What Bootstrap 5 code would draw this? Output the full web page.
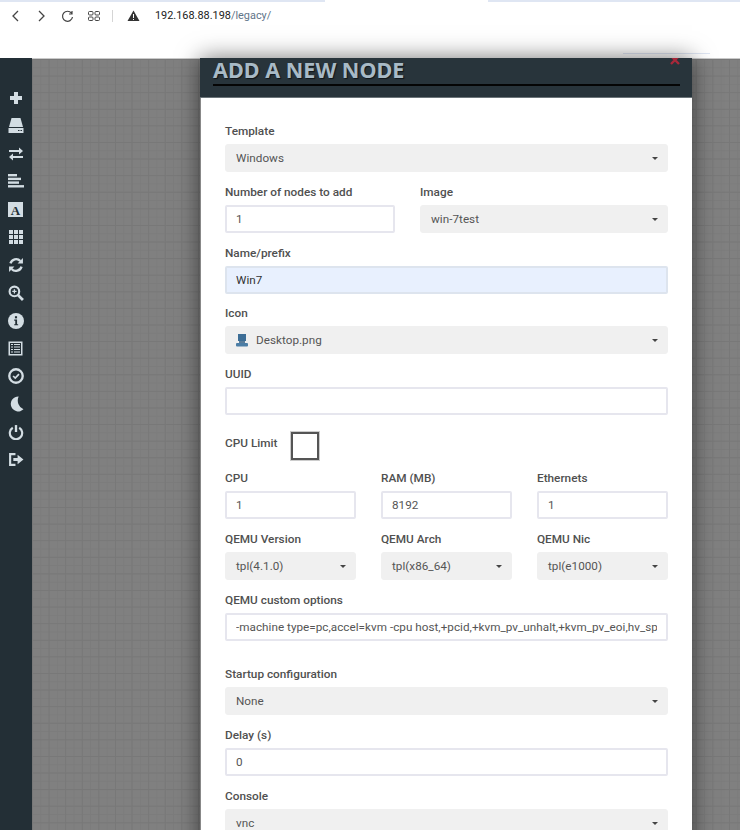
<!DOCTYPE html>
<html><head><meta charset="utf-8">
<link href="https://cdn.jsdelivr.net/npm/bootstrap@5.3.0/dist/css/bootstrap.min.css" rel="stylesheet">
<style>
html,body{height:830px;overflow:hidden;background:#fff}
body{font-family:Roboto,"Liberation Sans",sans-serif;font-size:12px;color:#444}
.shell{height:830px;overflow:hidden}
.browserbar{height:58px;position:relative;flex:none;background:#fff}
.tabedge{height:2px;background:#dfe6f3;position:absolute;top:0}
.tabedge.l{left:0;width:325px}.tabedge.r{left:488px;right:0}
.bottomedge{position:absolute;left:623px;width:87px;top:53px;height:1px;background:#dfe6f3}
.toolrow{position:absolute;left:0;top:4px;height:24px}
.toolrow svg{display:block}
.urltext{font-size:10.900px;color:#222;margin-left:15px}
.urltext span{color:#5f7488}
.sep{width:1px;height:12px;background:#d5d5d5;margin:0 14px 0 10px}
.workspace{flex:1;min-height:0}
.sidebar{width:32px;flex:none;background:#232f36;padding-top:26px;padding-right:1px}
.sideitem{height:27.85px;display:flex;justify-content:center;align-items:center;color:#d3dde3}
.canvasarea{flex:1;border-top:1px solid #c9c9c9;background-color:#808080;background-image:linear-gradient(#787878 1px,transparent 1px),linear-gradient(90deg,#787878 1px,transparent 1px),linear-gradient(#7c7c7c 1px,transparent 1px),linear-gradient(90deg,#7c7c7c 1px,transparent 1px);background-size:16.6px 16.6px,16.6px 16.6px,8.3px 8.3px,8.3px 8.3px;padding-left:168px}
.dialog{width:492px;height:900px;border:0;border-radius:0;background:#fff;box-shadow:0 0 22px rgba(0,0,0,.55);flex:none;margin-top:-1px}
.dialoghead{height:40px;background:#28343b;border-bottom:1px solid #6b7479;padding:0 12px 0 13px;position:relative;display:block}
.dialoghead h4{font-family:"Noto Sans",sans-serif;font-weight:700;font-size:21.6px;line-height:24px;margin:0;height:28px;color:#a8bac6;border-bottom:2px solid #050505;text-shadow:1px 1px 1px #0f151a}
.closex{position:absolute;right:12px;top:0;width:10px;height:7px}
.dialogbody{padding:25px 24px 0;border-left:1px solid #888}
.fg{height:60.8px}
.fg label{display:block;height:17px;line-height:17px;margin-bottom:4px;margin-top:0;font-weight:500;color:#505050;font-size:11.800px}
.row{--bs-gutter-x:25px;--bs-gutter-y:0}
.form-control.fld,.form-select.fld{height:28px;min-height:28px;border-radius:2px;font-size:11.700px;padding:0 9px;color:#555;line-height:26px;font-family:inherit;letter-spacing:.03px}
.form-control.fld{border:2px solid #e6e6ee;box-shadow:none}
.form-select.fld{background-color:#f0f0f0;border:1px solid #f0f0f0;border-radius:3px;background-image:none;padding:0 24px 0 10px;display:flex;align-items:center;position:relative}
.form-select.fld::after{content:"";position:absolute;right:9px;top:12px;border:3.500px solid transparent;border-top-color:#444;border-bottom:0}
.form-control.filled{background:#e8f0fe;border-color:#dde4ee;color:#333}
.limitrow{height:43.5px;padding-top:5px}
.limitrow label{font-weight:500;font-size:11.800px;color:#505050;margin:2px 14px 0 0;line-height:18px}
.bigcheck{width:28px;height:28px;border:2px solid #555;box-shadow:0 0 0 1px #ccc;background:#fff}
.fg.last{height:74px}
.minipc{margin-right:8px;flex:none}
</style></head><body>
<div class="shell d-flex flex-column">
<div class="browserbar">
<div class="tabedge l"></div><div class="tabedge r"></div><div class="bottomedge"></div>
<div class="toolrow d-flex align-items-center">
<svg width="30" height="24" viewBox="0 0 30 24"><path d="M18 7l-5 5 5 5" fill="none" stroke="#444" stroke-width="1.3"/></svg>
<svg width="24" height="24" viewBox="0 0 24 24"><path d="M9 7l5 5-5 5" fill="none" stroke="#444" stroke-width="1.3"/></svg>
<svg width="33" height="24" viewBox="0 0 33 24"><path d="M17.500 9.200A5 5 0 1 0 18.500 13M18 7v3h-3" fill="none" stroke="#444" stroke-width="1.200"/></svg>
<svg width="15" height="24" viewBox="0 0 15 24"><g fill="none" stroke="#444" stroke-width="1"><rect x="1.500" y="7.500" width="4.500" height="3.500" rx="1"/><rect x="8" y="7.500" width="4.500" height="3.500" rx="1"/><rect x="1.500" y="13" width="4.500" height="3.500" rx="1"/><rect x="8" y="13" width="4.500" height="3.500" rx="1"/></g></svg>
<div class="sep"></div>
<svg width="13" height="24" viewBox="0 0 13 24"><path d="M6.500 6.500L12.500 17H.5z" fill="#333"/><rect x="6" y="10" width="1" height="4" fill="#fff"/><rect x="6" y="15" width="1" height="1" fill="#fff"/></svg>
<div class="urltext">192.168.88.198<span>/legacy/</span></div>
</div>
</div>
<div class="workspace d-flex">
<div class="sidebar d-flex flex-column">
<div class="sideitem"><svg width="14" height="14" viewBox="0 0 14 14"><path d="M5 1h4v4h4v4H9v4H5V9H1V5h4z" fill="currentColor"/></svg></div>
<div class="sideitem"><svg width="16" height="17" viewBox="0 0 16 17"><path d="M3.500 1h9L15 10H1z" fill="currentColor"/><path d="M.5 11h15v5H.5z" fill="currentColor"/><path d="M10 13.500h1.500M12.500 13.500H14" stroke="#232f36"/></svg></div>
<div class="sideitem"><svg width="16" height="14" viewBox="0 0 16 14" fill="currentColor"><path d="M1 3h10V.5l4 3.500L11 7.500V5H1z"/><path d="M15 9H5V6.500L1 10l4 3.500V11h10z"/></svg></div>
<div class="sideitem"><svg width="16" height="14" viewBox="0 0 16 14" fill="currentColor"><rect x="0" y="0" width="9" height="2.400"/><rect x="0" y="3.700" width="13" height="2.400"/><rect x="0" y="7.400" width="11" height="2.400"/><rect x="0" y="11.100" width="16" height="2.400"/></svg></div>
<div class="sideitem"><svg width="15" height="15" viewBox="0 0 15 15"><rect width="15" height="15" fill="currentColor"/><text x="7.500" y="12.500" text-anchor="middle" font-family="Liberation Serif,serif" font-weight="700" font-size="13" fill="#232f36">A</text></svg></div>
<div class="sideitem"><svg width="14" height="14" viewBox="0 0 14 14" fill="currentColor"><rect x="0" y="0" width="4" height="4"/><rect x="5" y="0" width="4" height="4"/><rect x="10" y="0" width="4" height="4"/><rect x="0" y="5" width="4" height="4"/><rect x="5" y="5" width="4" height="4"/><rect x="10" y="5" width="4" height="4"/><rect x="0" y="10" width="4" height="4"/><rect x="5" y="10" width="4" height="4"/><rect x="10" y="10" width="4" height="4"/></svg></div>
<div class="sideitem"><svg width="16" height="16" viewBox="0 0 15 15"><path d="M2.300 6a5.500 5.500 0 0 1 9.300-2.300" fill="none" stroke="currentColor" stroke-width="2.200"/><path d="M14 1v5H9z" fill="currentColor"/><path d="M12.700 9a5.500 5.500 0 0 1-9.300 2.300" fill="none" stroke="currentColor" stroke-width="2.200"/><path d="M1 14V9h5z" fill="currentColor"/></svg></div>
<div class="sideitem"><svg width="16" height="16" viewBox="0 0 15 15"><circle cx="6" cy="6" r="4.500" fill="none" stroke="currentColor" stroke-width="2"/><path d="M9.500 9.500L14 14" stroke="currentColor" stroke-width="2.600"/><path d="M4 6h4M6 4v4" stroke="currentColor" stroke-width="1.200"/></svg></div>
<div class="sideitem"><svg width="16" height="16" viewBox="0 0 15 15"><circle cx="7.500" cy="7.500" r="7.500" fill="currentColor"/><rect x="6.500" y="3" width="2" height="2" fill="#232f36"/><path d="M5.800 6.200h2.700v4.300h1v1H5.800v-1h1V7.200h-1z" fill="#232f36"/></svg></div>
<div class="sideitem"><svg width="15" height="15" viewBox="0 0 15 15"><rect x=".5" y=".5" width="14" height="14" fill="currentColor"/><rect x="2" y="2" width="11" height="11" fill="#232f36"/><path d="M3 3.500h2M6 3.500h6M3 6h2M6 6h6M3 8.500h2M6 8.500h6M3 11h2M6 11h6" stroke="currentColor" stroke-width="1.200"/></svg></div>
<div class="sideitem"><svg width="16" height="16" viewBox="0 0 15 15"><circle cx="7.500" cy="7.500" r="6.300" fill="none" stroke="currentColor" stroke-width="2.200"/><path d="M4.800 7.500l2 2 3.500-3.800" fill="none" stroke="currentColor" stroke-width="1.600"/></svg></div>
<div class="sideitem"><svg width="16" height="16" viewBox="0 0 15 15"><path d="M10 .5a7 7 0 1 0 4.500 12A9 9 0 0 1 10 .5z" fill="currentColor"/></svg></div>
<div class="sideitem"><svg width="16" height="16" viewBox="0 0 15 15"><path d="M4.500 3.500a5.800 5.800 0 1 0 6 0" fill="none" stroke="currentColor" stroke-width="2"/><path d="M7.500 1v6.500" stroke="currentColor" stroke-width="2.200"/></svg></div>
<div class="sideitem"><svg width="16" height="15" viewBox="0 0 15 14"><path d="M7 2H2v10h5" fill="none" stroke="currentColor" stroke-width="2"/><path d="M5 5.500h4V2.500L14.500 7 9 11.500v-3H5z" fill="currentColor"/></svg></div>
</div>
<div class="canvasarea d-flex">
<div class="modal-content dialog d-block">
<div class="dialoghead"><h4>ADD A NEW NODE</h4>
<svg class="closex" viewBox="0 3 10 7"><path d="M1 1l8 8M9 1l-8 8" stroke="#a8283a" stroke-width="2.400"/></svg></div>
<div class="dialogbody">
<div class="fg"><label>Template</label><div class="form-select fld">Windows</div></div>
<div class="row">
<div class="col-5 fg"><label>Number of nodes to add</label><input class="form-control fld" value="1"></div>
<div class="col-7 fg"><label>Image</label><div class="form-select fld">win-7test</div></div>
</div>
<div class="fg"><label>Name/prefix</label><input class="form-control fld filled" value="Win7"></div>
<div class="fg"><label>Icon</label><div class="form-select fld"><svg class="minipc" width="12" height="14" viewBox="0 0 12 14"><rect x="2" y="1" width="8" height="7" fill="#3d6e96"/><rect x="3" y="8" width="6" height="2" fill="#5a7d9a"/><rect x="0" y="10" width="12" height="3.500" rx="1" fill="#4c7ea6"/></svg>Desktop.png</div></div>
<div class="fg"><label>UUID</label><input class="form-control fld" value=""></div>
<div class="limitrow d-flex align-items-start"><label>CPU Limit</label><div class="bigcheck"></div></div>
<div class="row">
<div class="col-4 fg"><label>CPU</label><input class="form-control fld" value="1"></div>
<div class="col-4 fg"><label>RAM (MB)</label><input class="form-control fld" value="8192"></div>
<div class="col-4 fg"><label>Ethernets</label><input class="form-control fld" value="1"></div>
</div>
<div class="row">
<div class="col-4 fg"><label>QEMU Version</label><div class="form-select fld">tpl(4.1.0)</div></div>
<div class="col-4 fg"><label>QEMU Arch</label><div class="form-select fld">tpl(x86_64)</div></div>
<div class="col-4 fg"><label>QEMU Nic</label><div class="form-select fld">tpl(e1000)</div></div>
</div>
<div class="fg last"><label>QEMU custom options</label><input class="form-control fld" value="-machine type=pc,accel=kvm -cpu host,+pcid,+kvm_pv_unhalt,+kvm_pv_eoi,hv_spinlocks=0x1fff,hv_vapic"></div>
<div class="fg"><label>Startup configuration</label><div class="form-select fld">None</div></div>
<div class="fg"><label>Delay (s)</label><input class="form-control fld" value="0"></div>
<div class="fg"><label>Console</label><div class="form-select fld">vnc</div></div>
</div>
</div>
</div>
</div>
</div>
<script src="https://cdn.jsdelivr.net/npm/bootstrap@5.3.0/dist/js/bootstrap.bundle.min.js"></script>
</body></html>
